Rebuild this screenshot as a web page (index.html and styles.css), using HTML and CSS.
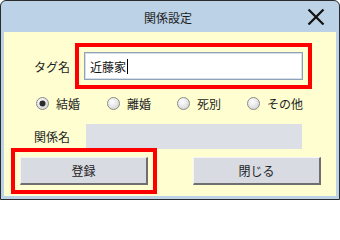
FILE: index.html
```html
<!DOCTYPE html>
<html lang="ja">
<head>
<meta charset="utf-8">
<link rel="stylesheet" href="styles.css">
</head>
<body>
<div class="window">
  <div class="titlebar">
    <span class="title">関係設定</span>
    <span class="close">
      <svg width="18" height="16" viewBox="0 0 18 16"><path d="M1.5 0.5 L16.5 15.5 M16.5 0.5 L1.5 15.5" stroke="#111" stroke-width="2.2" fill="none"/></svg>
    </span>
  </div>
  <div class="client">
    <div class="row row-name">
      <span class="lbl">タグ名</span>
      <div class="input hl">近藤家<span class="caret"></span></div>
    </div>
    <div class="radios">
      <div class="radio"><svg width="13" height="13" viewBox="0 0 13 13"><defs><radialGradient id="g1" cx="0.4" cy="0.35" r="0.7"><stop offset="0" stop-color="#ffffff"/><stop offset="1" stop-color="#d4d4d4"/></radialGradient></defs><circle cx="6.5" cy="6.5" r="6" fill="url(#g1)" stroke="#8c8c8c"/><circle cx="6.5" cy="6.5" r="3" fill="#2a2a2a"/></svg><span>結婚</span></div>
      <div class="radio"><svg width="13" height="13" viewBox="0 0 13 13"><circle cx="6.5" cy="6.5" r="6" fill="url(#g1)" stroke="#8c8c8c"/></svg><span>離婚</span></div>
      <div class="radio"><svg width="13" height="13" viewBox="0 0 13 13"><circle cx="6.5" cy="6.5" r="6" fill="url(#g1)" stroke="#8c8c8c"/></svg><span>死別</span></div>
      <div class="radio"><svg width="13" height="13" viewBox="0 0 13 13"><circle cx="6.5" cy="6.5" r="6" fill="url(#g1)" stroke="#8c8c8c"/></svg><span>その他</span></div>
    </div>
    <div class="row row-rel">
      <span class="lbl lbl-rel">関係名</span>
      <div class="field"></div>
    </div>
    <div class="buttons">
      <button class="btn hl">登録</button>
      <button class="btn">閉じる</button>
    </div>
  </div>
</div>
</body>
</html>
```
FILE: styles.css
```css
html, body {
  margin: 0;
  padding: 0;
  background: #ffffff;
}
body {
  font-family: "Noto Sans CJK JP", "Noto Sans", sans-serif;
  font-size: 12px;
  color: #1e1e1e;
}
.window {
  width: 340px;
  height: 200px;
  box-sizing: border-box;
  border: 1px solid #2b2b2b;
  border-radius: 6px 6px 0 0;
  background: #bcd2e7;
  padding: 0 3px 3px 3px;
  display: flex;
  flex-direction: column;
}
.titlebar {
  height: 31px;
  display: flex;
  align-items: center;
  position: relative;
}
.title {
  flex: 1;
  text-align: center;
  padding-right: 4px;
  line-height: 31px;
  margin-top: 1px;
}
.close {
  position: absolute;
  left: 303px;
  top: 8px;
  width: 18px;
  height: 16px;
  display: block;
}
.close svg { display: block; }
.client {
  flex: 1;
  background: #fffed1;
  display: flex;
  flex-direction: column;
}
.row {
  display: flex;
  align-items: center;
  padding-left: 30px;
}
.lbl {
  width: 50px;
  flex: none;
}
.lbl-rel { width: 52px; }
.row-name {
  margin-top: 20px;
  height: 28px;
}
.input {
  width: 219px;
  height: 28px;
  box-sizing: border-box;
  border: 1px solid #8fa3b8;
  box-shadow: inset 0 0 0 1px #d6dfe9;
  background: #ffffff;
  display: flex;
  align-items: center;
  padding-left: 5px;
  font-size: 12px;
  color: #111;
}
.caret {
  display: inline-block;
  width: 1px;
  height: 15px;
  background: #000;
  margin-left: 1px;
}
.hl {
  outline: 4px solid #ff0000;
  outline-offset: 5px;
}
.radios {
  margin-top: 13px;
  height: 20px;
  padding-left: 32px;
  display: grid;
  grid-template-columns: 71px 70px 70px auto;
  align-items: center;
}
.radio {
  display: flex;
  align-items: center;
}
.radio svg {
  display: block;
  flex: none;
  margin-right: 7px;
}
.row-rel {
  margin-top: 11px;
  height: 25px;
}
.field {
  width: 216px;
  height: 25px;
  background: #dcdfe5;
}
.buttons {
  margin-top: 8px;
  height: 28px;
  padding-left: 16px;
  display: flex;
  gap: 45px;
}
.btn {
  width: 128px;
  height: 28px;
  box-sizing: border-box;
  margin: 0;
  padding: 0;
  font-family: "Noto Sans CJK JP", "Noto Sans", sans-serif;
  font-size: 12px;
  color: #1e1e1e;
  background: #d8dbe2;
  border-style: solid;
  border-width: 1px 2px 2px 1px;
  border-color: #f4f5f7 #6f6f6f #6f6f6f #f4f5f7;
  border-radius: 0;
}
```
